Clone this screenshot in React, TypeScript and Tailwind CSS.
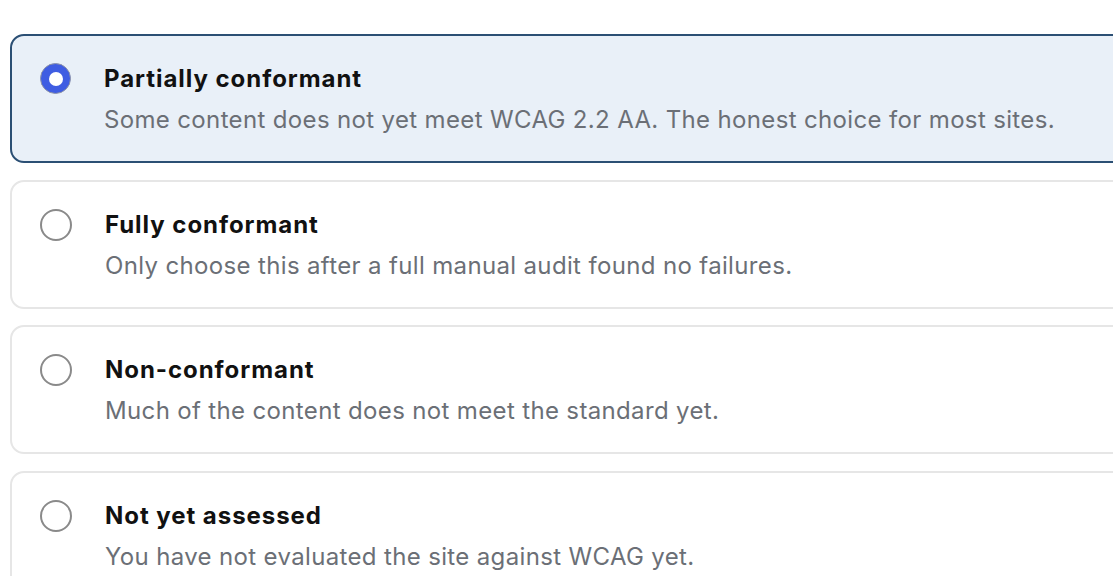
import React from "react";

const options = [
  { title: "Partially conformant", desc: "Some content does not yet meet WCAG 2.2 AA. The honest choice for most sites.", selected: true },
  { title: "Fully conformant", desc: "Only choose this after a full manual audit found no failures.", selected: false },
  { title: "Non-conformant", desc: "Much of the content does not meet the standard yet.", selected: false },
  { title: "Not yet assessed", desc: "You have not evaluated the site against WCAG yet.", selected: false },
];

function Radio({ selected }: { selected: boolean }) {
  if (selected) {
    return (
      <div className="w-[31px] h-[31px] rounded-full bg-[#3f5de2] border border-[#8d93a8] flex items-center justify-center shrink-0">
        <div className="w-[14px] h-[14px] rounded-full bg-white" />
      </div>
    );
  }
  return <div className="w-[32px] h-[32px] rounded-full border-2 border-[#8a8a8a] bg-white shrink-0" />;
}

export default function App() {
  return (
    <div className="w-[1113px] h-[576px] overflow-hidden bg-white" style={{ fontFamily: "Inter, 'Noto Sans', sans-serif" }}>
      <div className="pt-[34px] pl-[10px] w-[1140px] flex flex-col gap-[16.5px]">
        {options.map((o) => (
          <div
            key={o.title}
            className={
              "flex items-start h-[129px] rounded-[14px] border-2 pl-[28px] pt-[24px] " +
              (o.selected ? "border-[#2b4f74] bg-[#e9f0f8]" : "border-[#e6e6e6] bg-white")
            }
          >
            <div className="pt-[3px]">
              <Radio selected={o.selected} />
            </div>
            <div className="ml-[33px] flex flex-col">
              <div className="text-[24px] leading-[38px] font-bold text-[#111111] tracking-[0.95px]">{o.title}</div>
              <div className="text-[24px] leading-[38px] text-[#6b6f76] mt-[3px] tracking-[0.35px]">{o.desc}</div>
            </div>
          </div>
        ))}
      </div>
    </div>
  );
}
